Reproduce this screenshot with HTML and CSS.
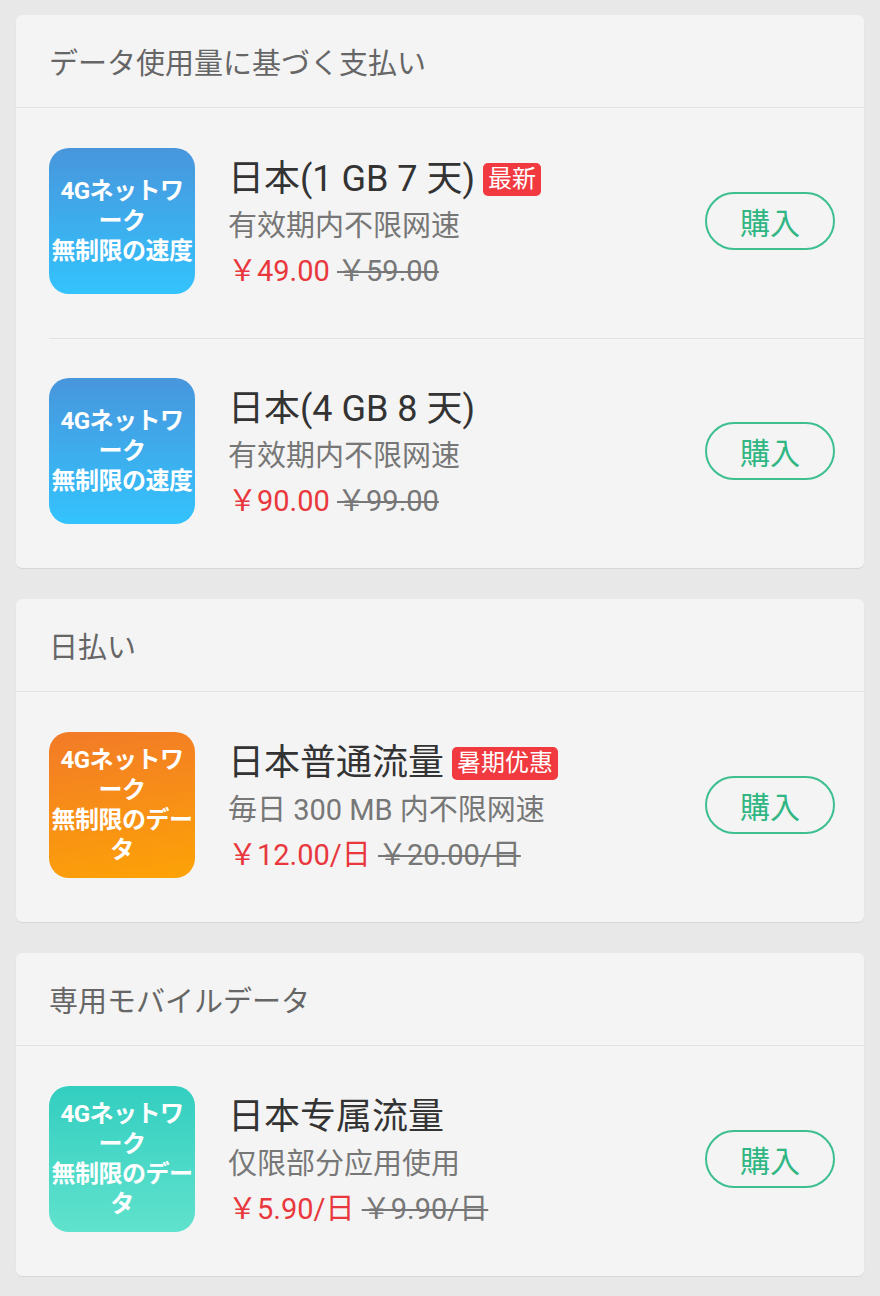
FILE: index.html
```html
<!DOCTYPE html>
<html lang="ja">
<head>
    <meta charset="UTF-8">
    <meta name="viewport" content="width=device-width, initial-scale=1.0">
    <title>データプラン</title>
    <link rel="stylesheet" href="styles.css">
</head>
<body>
    <div class="page">
        <!-- 従量課金 -->
        <section class="card">
            <div class="card-header">データ使用量に基づく支払い</div>
            <div class="plan">
                <div class="plan-icon icon-blue">4Gネットワ<br>ーク<br>無制限の速度</div>
                <div class="plan-info">
                    <div class="plan-title">日本(1 GB 7 天)<span class="tag">最新</span></div>
                    <div class="plan-desc" lang="zh-CN">有效期内不限网速</div>
                    <div class="plan-price"><span class="now">￥49.00</span> <span class="old">￥59.00</span></div>
                </div>
                <button class="buy">購入</button>
            </div>
            <div class="plan">
                <div class="plan-icon icon-blue">4Gネットワ<br>ーク<br>無制限の速度</div>
                <div class="plan-info">
                    <div class="plan-title">日本(4 GB 8 天)</div>
                    <div class="plan-desc" lang="zh-CN">有效期内不限网速</div>
                    <div class="plan-price"><span class="now">￥90.00</span> <span class="old">￥99.00</span></div>
                </div>
                <button class="buy">購入</button>
            </div>
        </section>

        <!-- 日払い -->
        <section class="card">
            <div class="card-header">日払い</div>
            <div class="plan">
                <div class="plan-icon icon-orange">4Gネットワ<br>ーク<br>無制限のデー<br>タ</div>
                <div class="plan-info">
                    <div class="plan-title">日本普通流量<span class="tag">暑期优惠</span></div>
                    <div class="plan-desc" lang="zh-CN">毎日 300 MB 内不限网速</div>
                    <div class="plan-price"><span class="now">￥12.00/日</span> <span class="old">￥20.00/日</span></div>
                </div>
                <button class="buy">購入</button>
            </div>
        </section>

        <!-- 専用 -->
        <section class="card">
            <div class="card-header">専用モバイルデータ</div>
            <div class="plan">
                <div class="plan-icon icon-teal">4Gネットワ<br>ーク<br>無制限のデー<br>タ</div>
                <div class="plan-info">
                    <div class="plan-title" lang="zh-CN">日本专属流量</div>
                    <div class="plan-desc" lang="zh-CN">仅限部分应用使用</div>
                    <div class="plan-price"><span class="now">￥5.90/日</span> <span class="old">￥9.90/日</span></div>
                </div>
                <button class="buy">購入</button>
            </div>
        </section>
    </div>
</body>
</html>
```

FILE: styles.css
```css
/* ページ全体 */
body {
    margin: 0;
    background-color: #e8e8e8;
    font-family: Roboto, "Noto Sans CJK JP", sans-serif;
    color: #333;
}

.page {
    padding: 15px 16px 0;
}

/* カード */
.card {
    background-color: #f4f4f4;
    border-radius: 6px;
    box-shadow: 0 1px 1px rgba(0, 0, 0, 0.08);
    margin-bottom: 31px;
}

.card-header {
    height: 92px;
    display: flex;
    align-items: center;
    padding-left: 33px;
    font-size: 29px;
    color: #666;
    border-bottom: 1px solid #e2e2e2;
}

/* プラン行 */
.plan {
    display: flex;
    align-items: center;
    margin-left: 33px;
    padding: 40px 29px 44px 0;
}

.plan + .plan {
    border-top: 1px solid #e2e2e2;
    padding-top: 39px;
}

.plan-icon {
    width: 146px;
    height: 146px;
    flex-shrink: 0;
    border-radius: 20px;
    display: flex;
    align-items: center;
    justify-content: center;
    text-align: center;
    color: #fff;
    font-family: Roboto, "Noto Sans CJK JP", sans-serif;
    font-weight: bold;
    font-size: 24px;
    line-height: 30px;
    letter-spacing: -0.5px;
}

.icon-blue {
    background: linear-gradient(180deg, #4896dc, #33c3fd);
}

.icon-orange {
    background: linear-gradient(170deg, #f27a28, #fda306);
}

.icon-teal {
    background: linear-gradient(180deg, #33cec0, #60e2cd);
}

.plan-info {
    flex: 1;
    margin-left: 33px;
    padding-top: 6px;
}

.plan-title {
    font-size: 36px;
    line-height: 48px;
    color: #333;
    display: flex;
    align-items: center;
}

.tag {
    margin-left: 8px;
    background-color: #f03a3f;
    color: #fff;
    font-size: 24px;
    line-height: 33px;
    padding: 0 5px;
    border-radius: 5px;
}

.plan-desc {
    font-size: 29px;
    line-height: 46px;
    color: #777;
}

.plan-price {
    font-size: 29px;
    line-height: 44px;
}

.plan-price .now {
    color: #e8383d;
}

.plan-price .old {
    color: #777;
    text-decoration: line-through;
}

/* 購入ボタン */
.buy {
    width: 130px;
    height: 58px;
    border: 2px solid #3dbf8f;
    border-radius: 29px;
    background: transparent;
    color: #2fb683;
    font-family: "Noto Sans CJK JP", sans-serif;
    font-size: 30px;
    padding: 0;
}
```
